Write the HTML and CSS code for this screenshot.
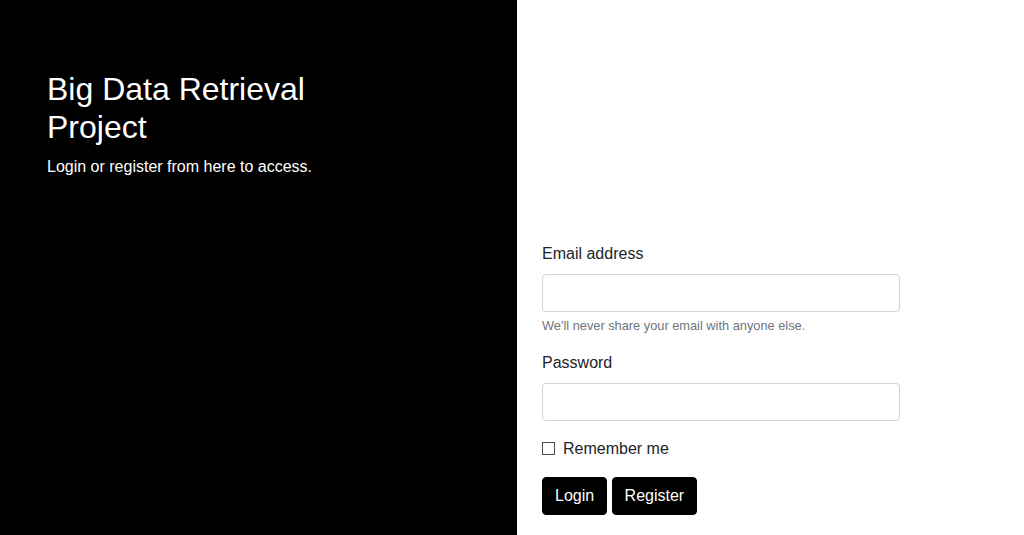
FILE: index.html
```html
<!DOCTYPE html>
<html lang="en">
<head>
<meta charset="utf-8">
<title>Big Data Retrieval Project</title>
<link rel="stylesheet" href="styles.css">
</head>
<body>
<div class="page">
  <aside class="sidebar">
    <div class="main-text">
      <h2>Big Data Retrieval Project</h2>
      <p>Login or register from here to access.</p>
    </div>
  </aside>
  <main class="main">
    <form class="login-form">
      <div class="form-group">
        <label for="email">Email address</label>
        <input type="email" id="email" class="form-control">
        <small class="form-text">We'll never share your email with anyone else.</small>
      </div>
      <div class="form-group">
        <label for="password">Password</label>
        <input type="password" id="password" class="form-control">
      </div>
      <div class="form-check">
        <input type="checkbox" id="remember" class="form-check-input">
        <label for="remember" class="form-check-label">Remember me</label>
      </div>
      <div class="actions"><button type="button" class="btn">Login</button> <button type="button" class="btn">Register</button></div>
    </form>
  </main>
</div>
</body>
</html>
```
FILE: styles.css
```css
* { box-sizing: border-box; }
html, body {
  margin: 0;
  height: 100%;
}
body {
  font-family: "Liberation Sans", Arial, sans-serif;
  font-size: 16px;
  line-height: 1.5;
  color: #212529;
  background: #fff;
}
.page {
  display: flex;
  height: 535px;
  overflow: hidden;
}
.sidebar {
  width: 517px;
  flex: none;
  background: #000;
  color: #fff;
  padding: 70px 0 0 47px;
}
.main-text {
  max-width: 320px;
}
.main-text h2 {
  margin: 0 0 8px;
  font-size: 32px;
  font-weight: 400;
  line-height: 1.2;
}
.main-text p {
  margin: 0;
  font-size: 16px;
}
.main {
  flex: 1;
  padding: 242px 0 0 25px;
}
.login-form {
  width: 358px;
}
.form-group {
  margin-bottom: 16px;
}
.form-group label {
  display: inline-block;
  margin-bottom: 8px;
}
.form-control {
  display: block;
  width: 100%;
  height: 38px;
  padding: 6px 12px;
  font-family: inherit;
  font-size: 16px;
  color: #495057;
  background: #fff;
  border: 1px solid #ced4da;
  border-radius: 4px;
  margin: 0;
}
.form-text {
  display: block;
  margin-top: 4px;
  font-size: 12.8px;
  color: #6c757d;
}
.form-check {
  position: relative;
  display: block;
  padding-left: 20px;
  margin-bottom: 16px;
}
.form-check-input {
  position: absolute;
  left: 0;
  top: 0;
  margin: 5px 0 0 0;
  width: 13px;
  height: 13px;
  appearance: none;
  -webkit-appearance: none;
  background: #fff;
  border: 1px solid #4d4d4d;
  border-radius: 0;
}
.form-check-label {
  display: inline-block;
  margin-left: 1px;
}
.actions {
  font-size: 16px;
}
.btn {
  display: inline-block;
  height: 38px;
  padding: 6px 12px;
  font-family: inherit;
  font-size: 16px;
  line-height: 1.5;
  color: #fff;
  background: #000;
  border: 1px solid #000;
  border-radius: 4px;
  cursor: pointer;
}
```
